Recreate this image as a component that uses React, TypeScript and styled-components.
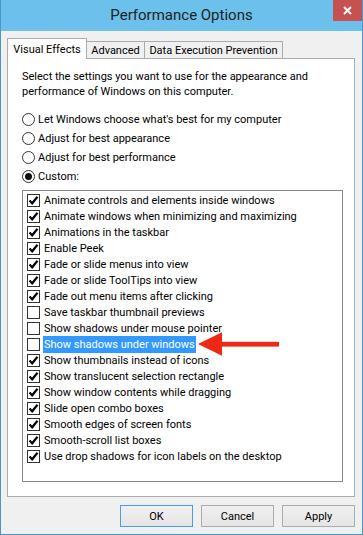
import React from 'react';
import styled, { createGlobalStyle } from 'styled-components';

const GlobalStyle = createGlobalStyle`
  html, body {
    margin: 0;
    padding: 0;
    background: #ffffff;
  }
  body {
    font-family: Roboto, "Noto Sans", sans-serif;
    font-size: 11px;
    color: #000;
  }
`;

const Window = styled.div`
  width: 363px;
  height: 535px;
  box-sizing: border-box;
  border: 1px solid #4797c8;
  border-top: none;
  background: #f0f0f0;
  display: flex;
  flex-direction: column;
`;

const TitleBar = styled.div`
  height: 31px;
  flex: none;
  background: #6bc1ec;
  display: grid;
  grid-template-columns: 29px 1fr 29px;
  align-items: start;
`;

const Title = styled.div`
  grid-column: 2;
  text-align: center;
  line-height: 31px;
  font-size: 15px;
  color: #222;
`;

const CloseButton = styled.div`
  grid-column: 3;
  height: 21px;
  background: #c75050;
  display: flex;
  align-items: center;
  justify-content: center;
`;

const Body = styled.div`
  flex: 1;
  display: flex;
  flex-direction: column;
  padding: 7px 7px 7px 6px;
`;

const TabStrip = styled.div`
  display: flex;
  align-items: flex-end;
`;

const Tab = styled.div<{ $active?: boolean; $w: number }>`
  width: ${(p) => p.$w}px;
  box-sizing: border-box;
  height: ${(p) => (p.$active ? 21 : 17)}px;
  margin-bottom: ${(p) => (p.$active ? -1 : 0)}px;
  background: ${(p) => (p.$active ? '#ffffff' : '#f0f0f0')};
  border-top: 1px solid #acacac;
  border-right: 1px solid #acacac;
  border-left: ${(p) => (p.$active ? '1px solid #acacac' : 'none')};
  position: relative;
  z-index: ${(p) => (p.$active ? 1 : 0)};
  display: flex;
  align-items: center;
  justify-content: center;
  white-space: nowrap;
`;

const Panel = styled.div`
  height: 439px;
  box-sizing: border-box;
  border: 1px solid #acacac;
  background: #ffffff;
  padding: 10px 11px 0 14px;
  display: flex;
  flex-direction: column;
`;

const Description = styled.p`
  margin: 0;
  line-height: 15px;
`;

const RadioGroup = styled.div`
  margin-top: 11px;
  display: flex;
  flex-direction: column;
`;

const RadioRow = styled.div`
  height: 19px;
  display: flex;
  align-items: center;
`;

const RadioCircle = styled.span<{ $on?: boolean }>`
  width: 13px;
  height: 13px;
  box-sizing: border-box;
  border: 1px solid #333;
  border-radius: 50%;
  background: #fff;
  display: flex;
  align-items: center;
  justify-content: center;
  &::after {
    content: '';
    display: ${(p) => (p.$on ? 'block' : 'none')};
    width: 7px;
    height: 7px;
    border-radius: 50%;
    background: #111;
  }
`;

const RadioLabel = styled.span`
  margin-left: 3px;
`;

const ListBox = styled.div`
  margin-top: 4px;
  height: 292px;
  box-sizing: border-box;
  border: 1px solid #828790;
  padding-top: 1px;
  position: relative;
`;

const ListItem = styled.div`
  height: 16px;
  display: flex;
  align-items: center;
  padding-left: 4px;
`;

const CheckBox = styled.span`
  width: 13px;
  height: 13px;
  box-sizing: border-box;
  border: 1px solid #333;
  background: #fff;
  display: flex;
  align-items: center;
  justify-content: center;
`;

const ItemLabel = styled.span<{ $selected?: boolean }>`
  margin-left: 3px;
  padding: 0 1px;
  line-height: 17px;
  background: ${(p) => (p.$selected ? '#3399ff' : 'transparent')};
  color: ${(p) => (p.$selected ? '#ffffff' : '#000')};
  white-space: nowrap;
`;

const Arrow = styled.svg`
  position: absolute;
  left: 174px;
  top: 140px;
`;

const ButtonRow = styled.div`
  margin-top: 8px;
  display: flex;
  justify-content: flex-end;
  gap: 8px;
`;

const Button = styled.div<{ $default?: boolean }>`
  width: 73px;
  height: 22px;
  box-sizing: border-box;
  border: 1px solid ${(p) => (p.$default ? '#4a9fe8' : '#acacac')};
  background: linear-gradient(#f0f0f0, #e5e5e5);
  display: flex;
  align-items: center;
  justify-content: center;
`;

const Check = () => (
  <svg width="11" height="11" viewBox="0 0 11 11">
    <path d="M1.5 5.5 L4.2 8.3 L9.5 1.8" fill="none" stroke="#000" strokeWidth="2.2" />
  </svg>
);

const radios = [
  { label: "Let Windows choose what's best for my computer", on: false },
  { label: 'Adjust for best appearance', on: false },
  { label: 'Adjust for best performance', on: false },
  { label: 'Custom:', on: true },
];

const effects: [string, boolean][] = [
  ['Animate controls and elements inside windows', true],
  ['Animate windows when minimizing and maximizing', true],
  ['Animations in the taskbar', true],
  ['Enable Peek', true],
  ['Fade or slide menus into view', true],
  ['Fade or slide ToolTips into view', true],
  ['Fade out menu items after clicking', true],
  ['Save taskbar thumbnail previews', false],
  ['Show shadows under mouse pointer', false],
  ['Show shadows under windows', false],
  ['Show thumbnails instead of icons', true],
  ['Show translucent selection rectangle', true],
  ['Show window contents while dragging', true],
  ['Slide open combo boxes', true],
  ['Smooth edges of screen fonts', true],
  ['Smooth-scroll list boxes', true],
  ['Use drop shadows for icon labels on the desktop', true],
];

export default function App() {
  return (
    <>
      <GlobalStyle />
      <Window>
        <TitleBar>
          <Title>Performance Options</Title>
          <CloseButton>
            <svg width="9" height="9" viewBox="0 0 9 9">
              <path d="M1 1 L8 8 M8 1 L1 8" stroke="#fff" strokeWidth="2" />
            </svg>
          </CloseButton>
        </TitleBar>
        <Body>
          <TabStrip>
            <Tab $active $w={80}>Visual Effects</Tab>
            <Tab $w={58}>Advanced</Tab>
            <Tab $w={138}>Data Execution Prevention</Tab>
          </TabStrip>
          <Panel>
            <Description>
              Select the settings you want to use for the appearance and
              <br />
              performance of Windows on this computer.
            </Description>
            <RadioGroup>
              {radios.map((r) => (
                <RadioRow key={r.label}>
                  <RadioCircle $on={r.on} />
                  <RadioLabel>{r.label}</RadioLabel>
                </RadioRow>
              ))}
            </RadioGroup>
            <ListBox>
              {effects.map(([label, checked], i) => (
                <ListItem key={label}>
                  <CheckBox>{checked && <Check />}</CheckBox>
                  <ItemLabel $selected={i === 9}>{label}</ItemLabel>
                </ListItem>
              ))}
              <Arrow width="83" height="26" viewBox="0 0 83 26">
                <polygon points="1,13 25,1.3 25,24.7" fill="#ee2812" />
                <rect x="24" y="10.8" width="58" height="4.8" fill="#ee2812" />
              </Arrow>
            </ListBox>
          </Panel>
          <ButtonRow>
            <Button $default>OK</Button>
            <Button>Cancel</Button>
            <Button>Apply</Button>
          </ButtonRow>
        </Body>
      </Window>
    </>
  );
}
